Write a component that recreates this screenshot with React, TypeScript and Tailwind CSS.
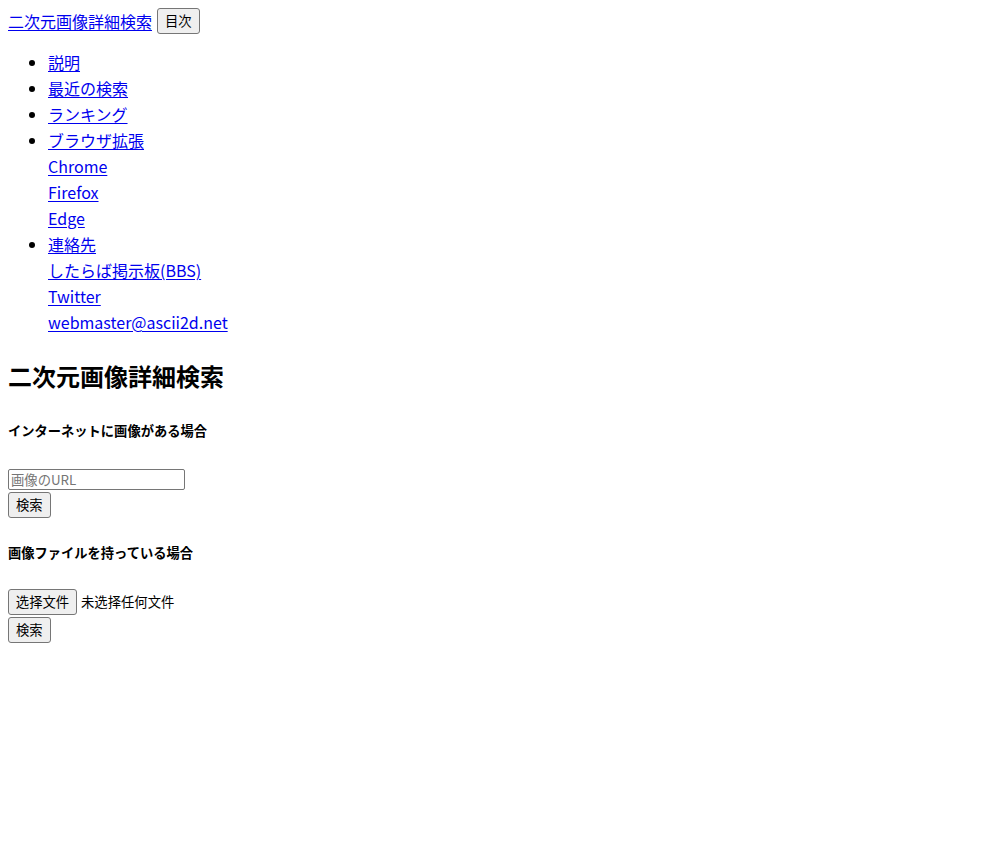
const link = "text-[#0000ee] underline underline-offset-2";
const btn =
  "inline-flex items-center justify-center h-[26px] px-[7px] whitespace-nowrap bg-[#efefef] border border-[#767676] rounded-[3px] text-[13.33px] leading-none text-black";

export default function App() {
  return (
    <div className="min-h-screen bg-white p-2 text-black text-[16px] leading-[26px] font-['Noto_Sans_CJK_JP','Noto_Sans_CJK_SC',sans-serif]">
      {/* header */}
      <div className="flex items-center h-[26px] gap-[5px]">
        <a href="#" className={link}>
          二次元画像詳細検索
        </a>
        <button className={btn}>目次</button>
      </div>

      {/* menu */}
      <ul className="mt-[15px] list-disc pl-10">
        <li>
          <a href="#" className={link}>説明</a>
        </li>
        <li>
          <a href="#" className={link}>最近の検索</a>
        </li>
        <li>
          <a href="#" className={link}>ランキング</a>
        </li>
        <li>
          <a href="#" className={link}>ブラウザ拡張</a>
          <div>
            <a href="#" className={link}>Chrome</a>
          </div>
          <div>
            <a href="#" className={link}>Firefox</a>
          </div>
          <div>
            <a href="#" className={link}>Edge</a>
          </div>
        </li>
        <li>
          <a href="#" className={link}>連絡先</a>
          <div>
            <a href="#" className={link}>したらば掲示板(BBS)</a>
          </div>
          <div>
            <a href="#" className={link}>Twitter</a>
          </div>
          <div>
            <a href="#" className={link}>webmaster@ascii2d.net</a>
          </div>
        </li>
      </ul>

      <h2 className="mt-[21px] text-[24px] leading-[40px] font-bold">二次元画像詳細検索</h2>

      {/* url search */}
      <h5 className="mt-[24px] text-[13.28px] leading-[22px] font-bold">
        インターネットに画像がある場合
      </h5>
      <div className="mt-[27px] flex">
        <input
          type="text"
          placeholder="画像のURL"
          className="block w-[177px] h-[21px] px-[2px] border border-[#767676] rounded-[2px] text-[13.33px] leading-[17px] placeholder:text-[#757575] outline-none"
        />
      </div>
      <div className="mt-[2px] flex">
        <button className={btn}>検索</button>
      </div>

      {/* file search */}
      <h5 className="mt-[24px] text-[13.28px] leading-[22px] font-bold">
        画像ファイルを持っている場合
      </h5>
      <div className="mt-[25px] flex items-center h-[26px] gap-[4px] text-[13.33px]">
        <button className={`${btn} w-[69px] !px-0`}>选择文件</button>
        <span className="font-['Noto_Sans_CJK_SC',sans-serif]">未选择任何文件</span>
      </div>
      <div className="mt-[2px] flex">
        <button className={btn}>検索</button>
      </div>
    </div>
  );
}
